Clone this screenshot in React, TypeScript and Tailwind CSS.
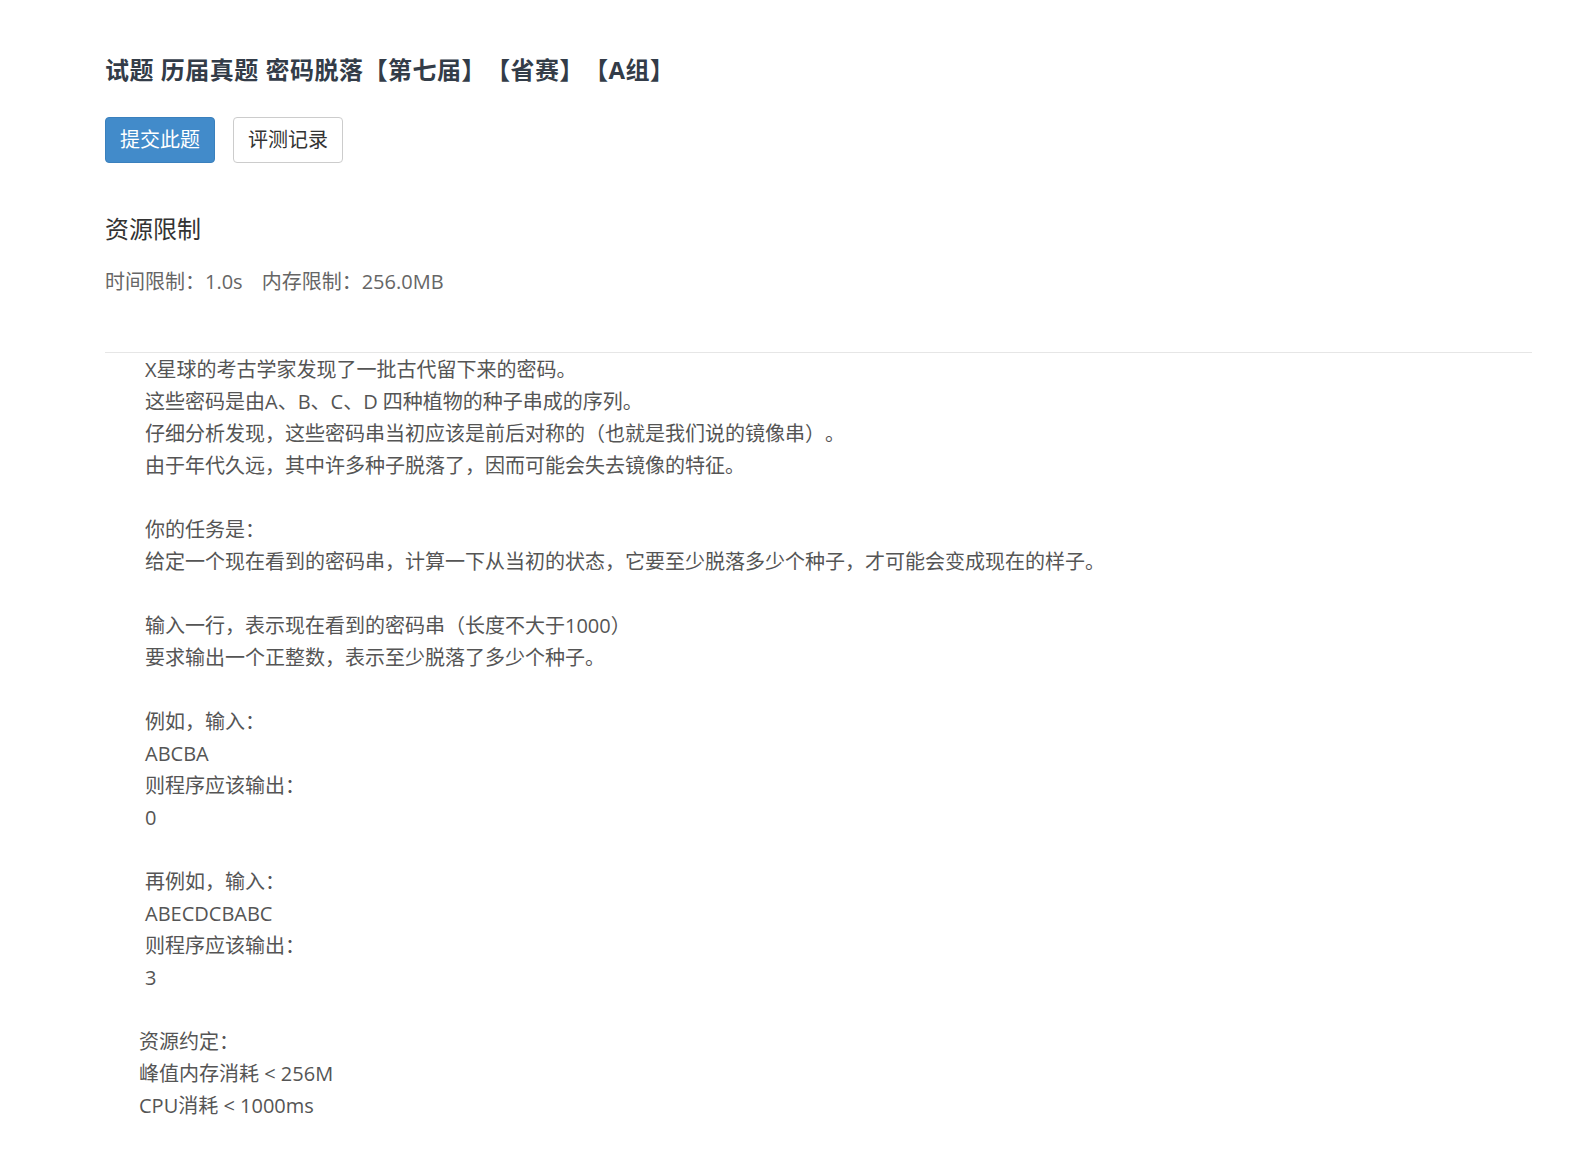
import React from "react";

const font = {
  fontFamily: '"Open Sans", "Noto Sans CJK SC", sans-serif',
  textSpacingTrim: "space-all",
} as React.CSSProperties;

const body: string[] = [
  "X星球的考古学家发现了一批古代留下来的密码。",
  "这些密码是由A、B、C、D 四种植物的种子串成的序列。",
  "仔细分析发现，这些密码串当初应该是前后对称的（也就是我们说的镜像串）。",
  "由于年代久远，其中许多种子脱落了，因而可能会失去镜像的特征。",
  "",
  "你的任务是：",
  "给定一个现在看到的密码串，计算一下从当初的状态，它要至少脱落多少个种子，才可能会变成现在的样子。",
  "",
  "输入一行，表示现在看到的密码串（长度不大于1000）",
  "要求输出一个正整数，表示至少脱落了多少个种子。",
  "",
  "例如，输入：",
  "ABCBA",
  "则程序应该输出：",
  "0",
  "",
  "再例如，输入：",
  "ABECDCBABC",
  "则程序应该输出：",
  "3",
  "",
];

const limits = ["资源约定：", "峰值内存消耗 < 256M", "CPU消耗 < 1000ms"];

export default function App() {
  return (
    <main className="min-h-screen bg-white pl-[105px] pr-[49px] pt-[54px] pb-10" style={font}>
      <h1 className="text-[24px] font-bold leading-[32px] tracking-[0.5px] text-[#333c48]">
        试题 历届真题 密码脱落【第七届】【省赛】【A组】
      </h1>

      <div className="mt-[31px] flex gap-[18px]">
        <button className="h-[46px] rounded-[4px] border border-[#3a80bd] bg-[#428bca] px-[14px] text-[20px] text-white">
          提交此题
        </button>
        <button className="h-[46px] rounded-[4px] border border-[#cccccc] bg-white px-[14px] text-[20px] text-[#333]">
          评测记录
        </button>
      </div>

      <h2 className="mt-[50px] text-[24px] leading-[32px] text-[#333]">资源限制</h2>
      <div className="mt-[21px] text-[20px] leading-[32px] text-[#666]">
        <span>时间限制：1.0s</span>
        <span className="ml-[19px]">内存限制：256.0MB</span>
      </div>

      <div className="mt-[54px] border-t border-[#e6e6e6] pt-px">
        <div className="pl-[40px] text-[20px] leading-[32px] text-[#555]">
          {body.map((line, i) =>
            line ? <div key={i}>{line}</div> : <div key={i} className="h-[32px]" />
          )}
        </div>
        <div className="pl-[34px] text-[20px] leading-[32px] text-[#555]">
          {limits.map((line, i) => (
            <div key={i}>{line}</div>
          ))}
        </div>
      </div>
    </main>
  );
}
